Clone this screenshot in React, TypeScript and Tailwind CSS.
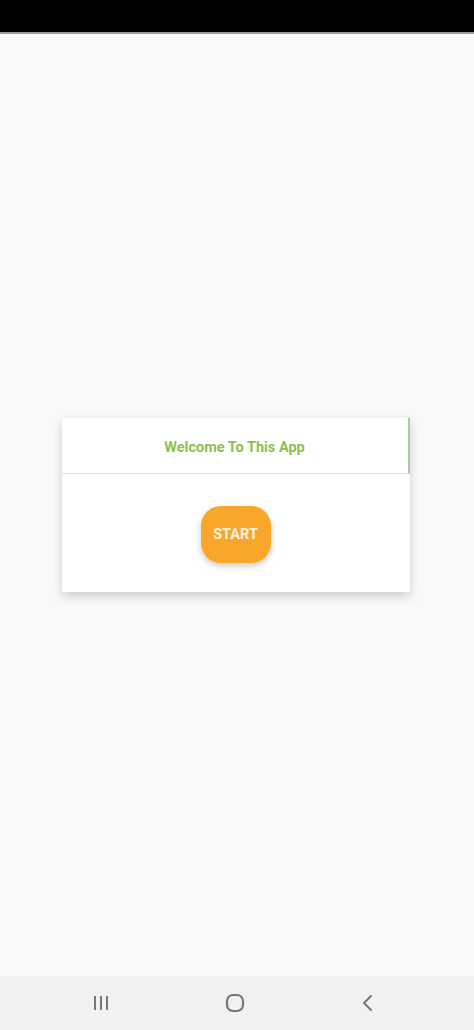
import React from "react";

export default function App() {
  return (
    <div className="flex h-[1030px] w-[474px] flex-col bg-[#f9f9f9]" style={{ fontFamily: "Roboto, 'Noto Sans', sans-serif" }}>
      <div className="h-[34px] w-full shrink-0 border-b-2 border-[#9a9a9a] bg-black" />
      <div className="flex flex-1 flex-col items-center">
        <div className="h-[384px] shrink-0" />
        <div className="ml-[-3px] w-[348px] bg-white shadow-[0_4px_10px_rgba(0,0,0,0.18)]">
          <div className="flex h-[56px] items-center justify-center border-b border-r-2 border-b-[#d9e8d9] border-r-[#a9c9a9] pt-[5px]">
            <span className="text-[14.5px] font-bold text-[#8cc152]">Welcome To This App</span>
          </div>
          <div className="flex h-[118px] items-start justify-center pt-[32px]">
            <button className="flex h-[57px] w-[70px] items-center justify-center rounded-[20px] bg-[#f9a62a] text-[14.5px] font-bold text-[#fdf3e0] shadow-[0_3px_6px_rgba(0,0,0,0.2)]">
              START
            </button>
          </div>
        </div>
      </div>
      <div className="flex h-[54px] shrink-0 items-center gap-[113px] bg-[#f1f1f1] pl-[91px]">
        <svg width="20" height="18" viewBox="0 0 20 18">
          <rect x="3" y="2" width="2" height="14" fill="#777" />
          <rect x="9" y="2" width="2" height="14" fill="#777" />
          <rect x="15" y="2" width="2" height="14" fill="#777" />
        </svg>
        <svg width="22" height="22" viewBox="0 0 22 22">
          <rect x="3" y="3" width="16" height="16" rx="6" fill="none" stroke="#777" strokeWidth="2.2" />
        </svg>
        <svg width="18" height="20" viewBox="0 0 18 20">
          <path d="M12 3 L5 10 L12 17" fill="none" stroke="#777" strokeWidth="2" strokeLinecap="round" strokeLinejoin="round" />
        </svg>
      </div>
    </div>
  );
}
